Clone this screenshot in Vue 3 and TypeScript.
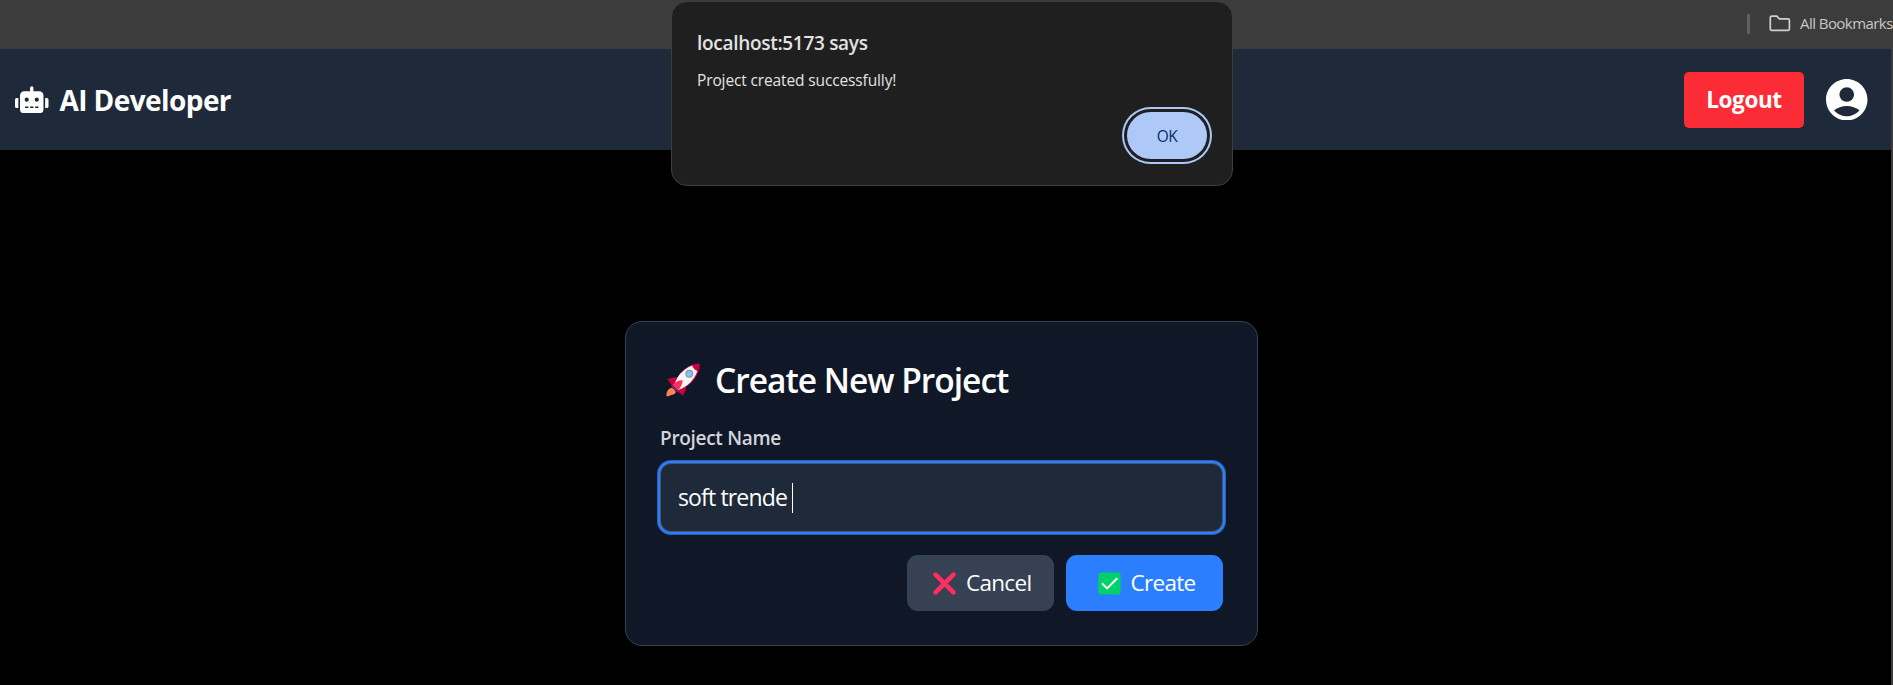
<script setup lang="ts">
import { ref } from 'vue'

const projectName = ref<string>('soft trende ')
</script>

<template>
  <div class="screen">
    <div class="bookmarks">
      <span class="divider"></span>
      <svg class="folder" viewBox="0 0 22 17" aria-hidden="true">
        <path d="M1.3 2.6Q1.3 1.2 2.7 1.2H7.8L10.4 3.8H19Q20.4 3.8 20.4 5.2V13.9Q20.4 15.3 19 15.3H2.7Q1.3 15.3 1.3 13.9Z" />
      </svg>
      <span class="bookmarks-label">All Bookmarks</span>
    </div>

    <div class="page">
      <header class="header">
        <svg class="robot" viewBox="0 0 640 512" aria-hidden="true">
          <path d="M32,224H64V416H32A32,32,0,0,1,0,384V256A32,32,0,0,1,32,224Zm512-48V448a64,64,0,0,1-64,64H160a64,64,0,0,1-64-64V176a80,80,0,0,1,80-80H288V32a32,32,0,0,1,64,0V96H464A80,80,0,0,1,544,176ZM264,256a40,40,0,1,0-40,40A40,40,0,0,0,264,256Zm-8,128H192v32h64Zm96,0H288v32h64ZM456,256a40,40,0,1,0-40,40A40,40,0,0,0,456,256Zm-8,128H384v32h64ZM640,256V384a32,32,0,0,1-32,32H576V224h32A32,32,0,0,1,640,256Z" />
        </svg>
        <span class="brand">AI Developer</span>
        <button class="logout"><span>Logout</span></button>
        <svg class="avatar" viewBox="2 2 20 20" aria-hidden="true">
          <path d="M12 2C6.48 2 2 6.48 2 12s4.48 10 10 10 10-4.48 10-10S17.52 2 12 2zm0 4c1.93 0 3.5 1.57 3.5 3.5S13.93 13 12 13s-3.5-1.57-3.5-3.5S10.07 6 12 6zm0 14c-2.03 0-4.43-.82-6.14-2.88C7.55 15.8 9.68 15 12 15s4.45.8 6.14 2.12C16.43 19.18 14.03 20 12 20z" />
        </svg>
      </header>

      <main class="main">
        <section class="modal">
          <h2 class="modal-title">
            <svg class="rocket" viewBox="0 0 34 34" aria-hidden="true">
              <path fill="#ff8257" d="M5.2 24.7Q.2 26.5.4 32.9Q3 33.7 4.8 31.9Q8 32.7 9.9 29.2L8 26Z" />
              <path fill="#c9003f" d="M1.4 16.3Q6 13.8 12 14.2L20.3 22.5Q20.1 28.5 16.8 32.6L11.5 28.2L6.2 22.9Z" />
              <path fill="#c9003f" d="M10.2 17.2C14 8.6 23 .5 32.4.4Q34 .4 33.9 2C33.6 10 27.8 20.3 17.4 25.2L12 25Z" />
              <path fill="#f5f5f6" d="M8.4 22.3C10.3 14 16.6 6.2 26.2 2.6Q27.3 6.6 31.4 8C28.4 16.8 21.4 24.1 12 27.1Z" />
              <path fill="#ff2d60" d="M6.5 22.1Q10.7 17.4 16.4 17.3Q16.9 17.5 16.6 18.3Q15.7 23.9 11.7 27.6Z" />
              <path stroke="#6f2c60" stroke-width="2" stroke-linecap="round" d="M6.3 23.2L11 27.8" />
              <circle cx="23.3" cy="10.8" r="3.3" fill="#7dc9ff" stroke="#8e98a6" stroke-width="1.3" />
            </svg>
            <span>Create New Project</span>
          </h2>
          <div class="label"><span>Project Name</span></div>
          <div class="field" role="textbox">
            <span class="value">{{ projectName }}</span><span class="caret"></span>
          </div>
          <div class="actions">
            <button class="btn cancel">
              <svg viewBox="0 0 23 23" aria-hidden="true">
                <path d="M2.6 2.6L20.4 20.4M20.4 2.6L2.6 20.4" stroke="#ff2d60" stroke-width="4.6" stroke-linecap="round" />
              </svg>
              <span>Cancel</span>
            </button>
            <button class="btn create">
              <svg viewBox="0 0 23 23" aria-hidden="true">
                <rect x=".4" y=".4" width="22.2" height="22.2" rx="2.6" fill="#00d26a" />
                <path d="M4.6 12L9.1 16.4L18.7 6.8" fill="none" stroke="#fff" stroke-width="2" stroke-linecap="round" stroke-linejoin="round" />
              </svg>
              <span>Create</span>
            </button>
          </div>
        </section>
      </main>
    </div>

    <div class="alert" role="alertdialog">
      <div class="alert-title"><span>localhost:5173 says</span></div>
      <div class="alert-text"><span>Project created successfully!</span></div>
      <button class="ok"><span>OK</span></button>
    </div>
  </div>
</template>

<style>
body {
  background: #000;
  overflow: hidden;
}
</style>

<style scoped>
* {
  box-sizing: border-box;
}

.screen {
  position: relative;
  width: 1893px;
  height: 685px;
  overflow: hidden;
  background: #000;
  color: #fff;
  font-family: 'Open Sans', 'Noto Sans', sans-serif;
  display: flex;
  flex-direction: column;
}

span {
  white-space: pre;
}

button {
  border: 0;
  padding: 0;
  color: inherit;
  font-family: inherit;
  display: flex;
  align-items: center;
}

.bookmarks {
  flex: none;
  height: 49px;
  background: #3c3c3c;
  display: flex;
  align-items: center;
  padding: 0 0 2px 1747px;
}

.divider {
  flex: none;
  width: 3px;
  height: 20px;
  border-radius: 1px;
  background: #5f5f5f;
}

.folder {
  flex: none;
  width: 22px;
  height: 17px;
  margin-left: 19px;
  fill: none;
  stroke: #d0d0d0;
  stroke-width: 1.7;
}

.bookmarks-label {
  flex: none;
  margin-left: 9px;
  padding-bottom: 1px;
  font-size: 15px;
  letter-spacing: -0.55px;
  color: #c7c7c7;
}

.page {
  flex: 1;
  border-right: 2px solid #3c3c3c;
}

.header {
  height: 101px;
  background: #1e2939;
  display: flex;
  align-items: center;
  padding: 0 23.5px 0 15px;
}

.robot {
  width: 33.5px;
  height: 27.4px;
  fill: #fff;
}

.brand {
  margin-left: 11px;
  font-size: 28px;
  line-height: 40px;
  font-weight: 700;
  letter-spacing: -0.58px;
}

.logout {
  width: 120px;
  height: 56px;
  margin-left: auto;
  border-radius: 5px;
  background: #fb2c36;
  justify-content: center;
  font-size: 22.5px;
  font-weight: 700;
  letter-spacing: -0.4px;
}

.avatar {
  width: 41.5px;
  height: 41.5px;
  margin-left: 22px;
  fill: #fff;
}

.main {
  padding: 171px 0 0 625px;
}

.modal {
  width: 633px;
  height: 325px;
  padding: 36px 34px 0;
  border: 1px solid #364153;
  border-radius: 17px;
  background: #101828;
}

.modal-title {
  margin: 0;
  height: 44px;
  padding-left: 6px;
  display: flex;
  align-items: center;
  font-size: 33.5px;
  font-weight: 600;
  letter-spacing: -1px;
}

.rocket {
  width: 34px;
  height: 34px;
  margin-right: 15px;
}

.label {
  height: 28px;
  margin-top: 22px;
  line-height: 28px;
  font-size: 19px;
  font-weight: 600;
  letter-spacing: -0.3px;
  color: #d1d5dc;
}

.field {
  width: 563px;
  height: 69px;
  margin-top: 11px;
  padding-left: 17px;
  display: flex;
  align-items: center;
  border: 1px solid #4a5565;
  border-radius: 11px;
  background: #1e2939;
  box-shadow: 0 0 0 2px #2b7fff, 0 0 0 3px #2560bd;
  font-size: 23px;
}

.value {
  padding-bottom: 1px;
  letter-spacing: -0.85px;
}

.caret {
  width: 1px;
  height: 30px;
  background: #fff;
}

.actions {
  display: flex;
  gap: 12px;
  margin: 23px 0 0 247px;
}

.btn {
  height: 56px;
  border-radius: 11px;
  font-size: 22.5px;
  letter-spacing: -0.7px;
}

.btn span {
  padding-bottom: 2px;
}

.btn svg {
  width: 23px;
  height: 23px;
  margin-right: 10px;
}

.cancel {
  width: 147px;
  padding-left: 26px;
  background: #364153;
}

.create {
  width: 157px;
  padding-left: 31.5px;
  background: #2b7fff;
}

.alert {
  position: absolute;
  left: 671px;
  top: 1px;
  width: 562px;
  height: 185px;
  padding: 24px 20px 0 25px;
  border: 1px solid #3e3e3e;
  border-radius: 16px;
  background: #1f1f1f;
  color: #e3e3e3;
}

.alert-title {
  height: 34px;
  line-height: 34px;
  font-size: 19px;
  font-weight: 600;
  letter-spacing: -0.3px;
}

.alert-text {
  height: 30px;
  margin-top: 5px;
  line-height: 30px;
  font-size: 15.5px;
  letter-spacing: -0.13px;
}

.ok {
  width: 80px;
  height: 47px;
  margin: 17px 5px 0 auto;
  justify-content: center;
  border-radius: 24px;
  background: #aec9f7;
  box-shadow: 0 0 0 3px #1f1f1f, 0 0 0 5px #a8c7fa;
  color: #062e6f;
  font-size: 15.5px;
  font-weight: 500;
  letter-spacing: -0.4px;
}
</style>
